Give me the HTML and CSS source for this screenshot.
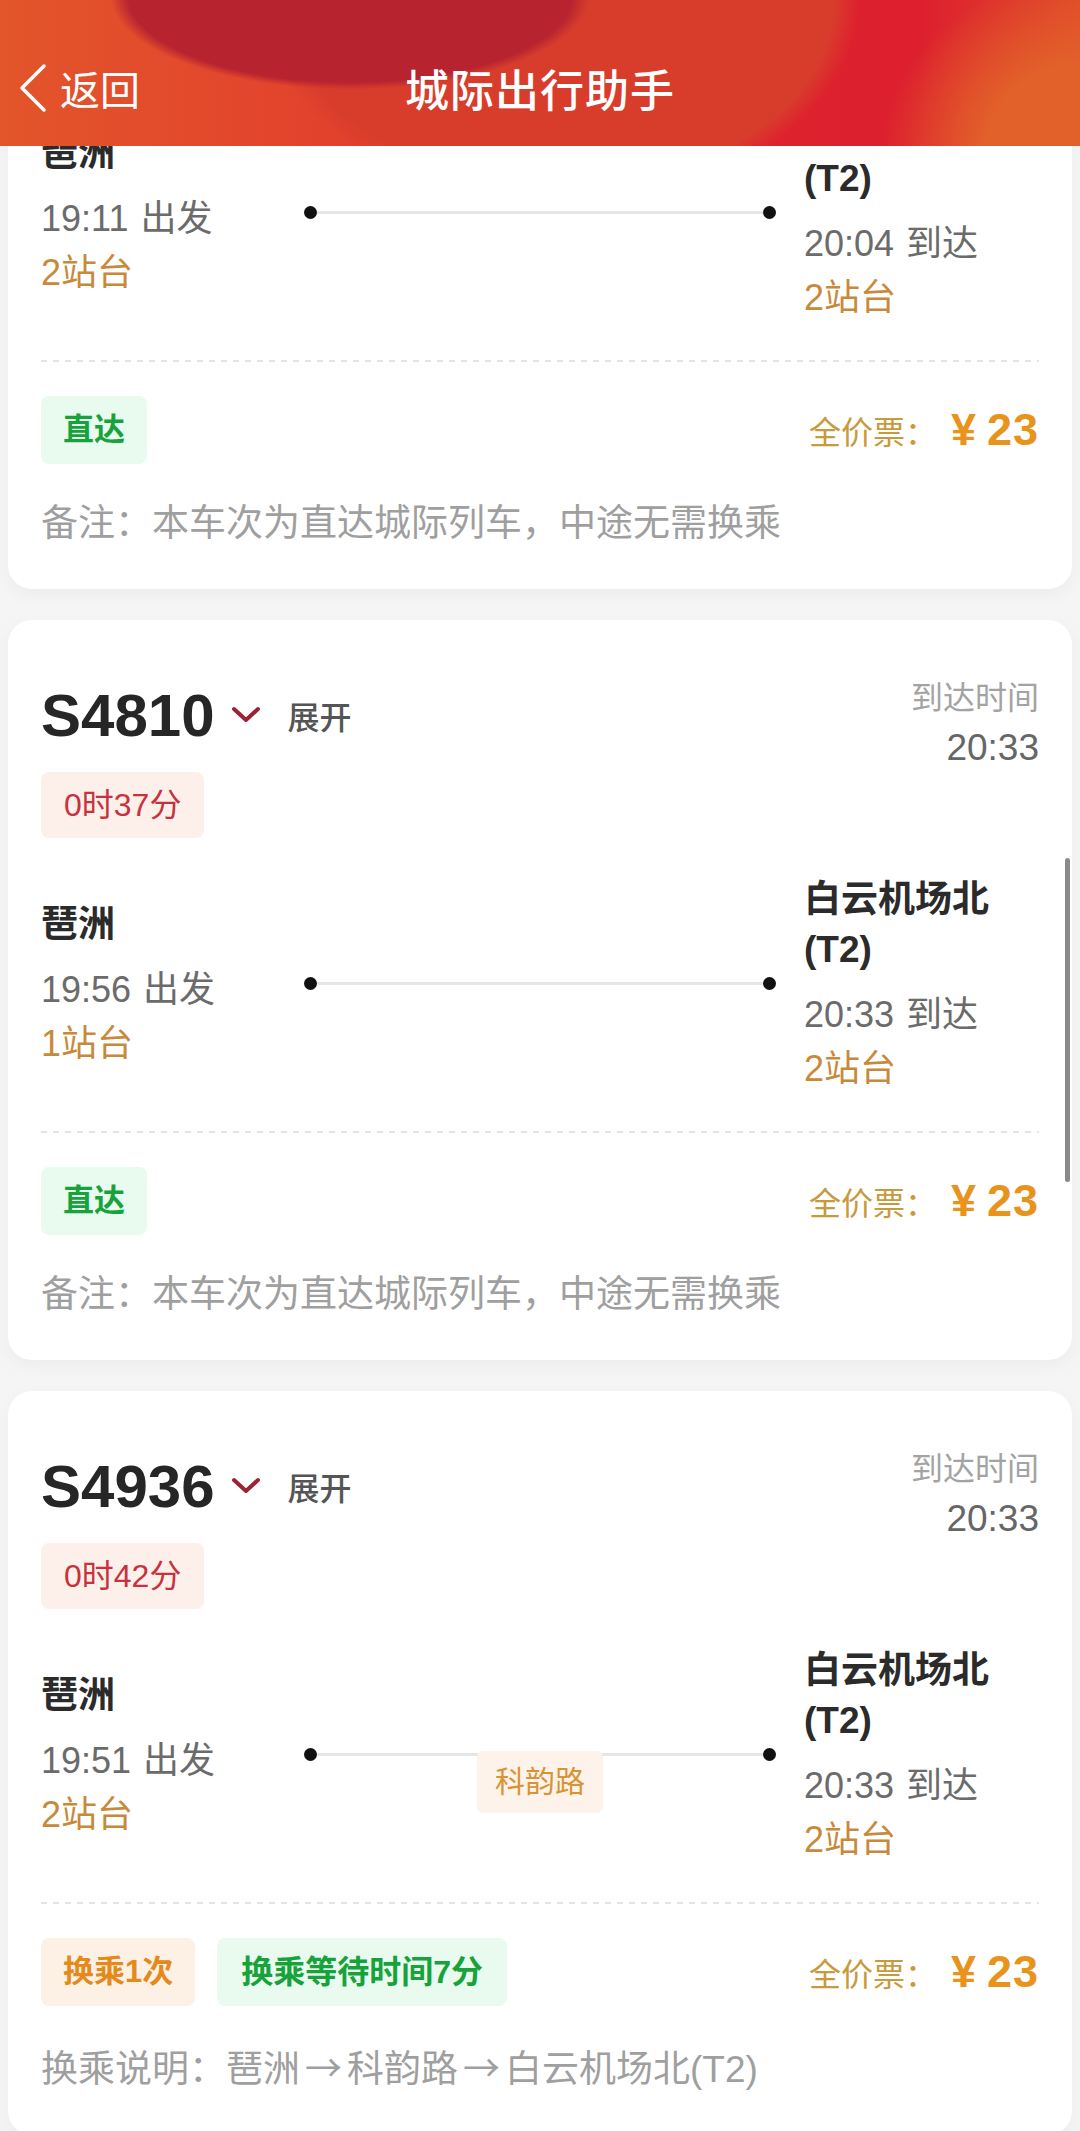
FILE: index.html
```html
<!DOCTYPE html>
<html lang="zh-CN">
<head>
    <meta charset="UTF-8">
    <meta name="viewport" content="width=device-width, initial-scale=1.0">
    <title>城际出行助手</title>
    <link rel="stylesheet" href="styles.css">
</head>
<body>
<div class="app">
    <header class="topbar">
        <a class="back">
            <svg class="back-icon" width="30" height="50" viewBox="0 0 30 50"><polyline points="26,3 4,25 26,47" fill="none" stroke="#fff" stroke-width="3.5" stroke-linecap="round" stroke-linejoin="round"/></svg>
            <span>返回</span>
        </a>
        <h1 class="title">城际出行助手</h1>
        <span></span>
    </header>

    <div class="feed">
        <div class="feed-inner">
            <!-- 已滚动到上方的车次 -->
            <div class="card">
                <div class="card-head">
                    <div class="head-left">
                        <div class="train"><span class="train-no">S4808</span><svg class="chev" width="30" height="18" viewBox="0 0 30 18"><polyline points="3,3 15,14 27,3" fill="none" stroke="#9b2335" stroke-width="4" stroke-linecap="round" stroke-linejoin="round"/></svg><span class="expand">展开</span></div>
                        <span class="tag tag-red">0时53分</span>
                    </div>
                    <div class="arrive">
                        <div class="arrive-label">到达时间</div>
                        <div class="arrive-time">20:04</div>
                    </div>
                </div>
                <div class="route">
                    <div class="stop">
                        <div class="stop-name">琶洲</div>
                        <div class="stop-time">19:11<span>出发</span></div>
                        <div class="stop-platform">2站台</div>
                    </div>
                    <div class="track"><i class="dot"></i><span class="track-line"></span><i class="dot"></i></div>
                    <div class="stop stop-end">
                        <div class="stop-name">白云机场北<br>(T2)</div>
                        <div class="stop-time">20:04<span>到达</span></div>
                        <div class="stop-platform">2站台</div>
                    </div>
                </div>
                <div class="divider"></div>
                <div class="card-foot">
                    <div class="tags"><span class="tag tag-green">直达</span></div>
                    <div class="price">全价票：<b><span class="yen">¥</span>23</b></div>
                </div>
                <p class="note">备注：本车次为直达城际列车，中途无需换乘</p>
            </div>

            <div class="card">
                <div class="card-head">
                    <div class="head-left">
                        <div class="train"><span class="train-no">S4810</span><svg class="chev" width="30" height="18" viewBox="0 0 30 18"><polyline points="3,3 15,14 27,3" fill="none" stroke="#9b2335" stroke-width="4" stroke-linecap="round" stroke-linejoin="round"/></svg><span class="expand">展开</span></div>
                        <span class="tag tag-red">0时37分</span>
                    </div>
                    <div class="arrive">
                        <div class="arrive-label">到达时间</div>
                        <div class="arrive-time">20:33</div>
                    </div>
                </div>
                <div class="route">
                    <div class="stop">
                        <div class="stop-name">琶洲</div>
                        <div class="stop-time">19:56<span>出发</span></div>
                        <div class="stop-platform">1站台</div>
                    </div>
                    <div class="track"><i class="dot"></i><span class="track-line"></span><i class="dot"></i></div>
                    <div class="stop stop-end">
                        <div class="stop-name">白云机场北<br>(T2)</div>
                        <div class="stop-time">20:33<span>到达</span></div>
                        <div class="stop-platform">2站台</div>
                    </div>
                </div>
                <div class="divider"></div>
                <div class="card-foot">
                    <div class="tags"><span class="tag tag-green">直达</span></div>
                    <div class="price">全价票：<b><span class="yen">¥</span>23</b></div>
                </div>
                <p class="note">备注：本车次为直达城际列车，中途无需换乘</p>
            </div>

            <div class="card">
                <div class="card-head">
                    <div class="head-left">
                        <div class="train"><span class="train-no">S4936</span><svg class="chev" width="30" height="18" viewBox="0 0 30 18"><polyline points="3,3 15,14 27,3" fill="none" stroke="#9b2335" stroke-width="4" stroke-linecap="round" stroke-linejoin="round"/></svg><span class="expand">展开</span></div>
                        <span class="tag tag-red">0时42分</span>
                    </div>
                    <div class="arrive">
                        <div class="arrive-label">到达时间</div>
                        <div class="arrive-time">20:33</div>
                    </div>
                </div>
                <div class="route">
                    <div class="stop">
                        <div class="stop-name">琶洲</div>
                        <div class="stop-time">19:51<span>出发</span></div>
                        <div class="stop-platform">2站台</div>
                    </div>
                    <div class="track">
                        <i class="dot"></i><span class="track-line"></span><i class="dot"></i>
                        <span class="via">科韵路</span>
                    </div>
                    <div class="stop stop-end">
                        <div class="stop-name">白云机场北<br>(T2)</div>
                        <div class="stop-time">20:33<span>到达</span></div>
                        <div class="stop-platform">2站台</div>
                    </div>
                </div>
                <div class="divider"></div>
                <div class="card-foot">
                    <div class="tags">
                        <span class="tag tag-orange">换乘1次</span>
                        <span class="tag tag-green">换乘等待时间7分</span>
                    </div>
                    <div class="price">全价票：<b><span class="yen">¥</span>23</b></div>
                </div>
                <p class="note">换乘说明：琶洲<span class="arrow">→</span>科韵路<span class="arrow">→</span>白云机场北(T2)</p>
            </div>
        </div>
        <div class="scrollbar"></div>
    </div>
</div>
</body>
</html>
```

FILE: styles.css
```css
/* Página */
body {
    margin: 0;
    font-family: "Liberation Sans", "Noto Sans CJK SC", sans-serif;
    background-color: #f5f5f5;
    color: #333;
}

.app {
    display: flex;
    flex-direction: column;
    height: 100vh;
    overflow: hidden;
}

/* Barra superior */
.topbar {
    flex: none;
    height: 146px;
    box-sizing: border-box;
    padding-top: 30px;
    display: grid;
    grid-template-columns: 1fr auto 1fr;
    align-items: center;
    color: #fff;
    background:
        radial-gradient(ellipse 300px 118px at 350px -5px, #b72430 0 74%, rgba(183, 36, 48, 0) 80%),
        radial-gradient(ellipse 440px 300px at 560px 0px, #d83d2c 0 62%, rgba(216, 61, 44, 0) 68%),
        radial-gradient(ellipse 260px 220px at 1090px 150px, #e2602a 0 40%, rgba(226, 96, 42, 0) 80%),
        linear-gradient(90deg, #e3552b 0%, #e2422c 30%, #df252d 62%, #dd1f2e 85%, #e0482a 100%);
}

.back {
    display: flex;
    align-items: center;
    padding-left: 18px;
    font-size: 40px;
}

.back-icon {
    margin-right: 12px;
}

.title {
    margin: 0;
    font-size: 44px;
    font-weight: 500;
    letter-spacing: 1px;
}

/* Lista */
.feed {
    flex: 1;
    position: relative;
    overflow: hidden;
}

.feed-inner {
    margin-top: -297px;
    display: flex;
    flex-direction: column;
    gap: 31px;
}

.card {
    margin: 0 8px;
    padding: 57px 33px 43px;
    background-color: #fff;
    border-radius: 24px;
    box-shadow: 0 6px 18px rgba(0, 0, 0, 0.04);
}

.card-head {
    display: flex;
    justify-content: space-between;
    align-items: flex-start;
}

.head-left {
    display: flex;
    flex-direction: column;
    align-items: flex-start;
}

.train {
    display: flex;
    align-items: center;
    height: 76px;
}

.train-no {
    font-size: 60px;
    font-weight: bold;
    color: #262626;
}

.chev {
    margin-left: 16px;
}

.expand {
    margin-left: 27px;
    font-size: 32px;
    font-weight: 500;
    color: #555;
}

.arrive {
    text-align: right;
}

.arrive-label {
    font-size: 32px;
    line-height: 42px;
    color: #a3a3a3;
}

.arrive-time {
    font-size: 37px;
    line-height: 58px;
    color: #666;
}

/* Etiquetas */
.tag {
    display: inline-block;
    height: 68px;
    line-height: 68px;
    padding: 0 22px;
    border-radius: 8px;
    font-size: 31px;
    font-weight: bold;
}

.head-left .tag {
    margin-top: 19px;
    height: 66px;
    line-height: 66px;
    padding: 0 23px;
    font-size: 32px;
    font-weight: normal;
}

.tag-red {
    background-color: #fdf0ea;
    color: #c6323e;
}

.tag-green {
    background-color: #e8fbee;
    color: #17a23b;
}

.tag-orange {
    background-color: #fdf1e6;
    color: #e5891b;
}

.tag-orange + .tag-green {
    font-size: 32px;
    padding: 0 24px;
}

/* Recorrido */
.route {
    margin-top: 37px;
    display: grid;
    grid-template-columns: 1fr 472px 1fr;
    align-items: center;
}

.stop-end {
    padding-left: 28px;
}

.stop-name {
    font-size: 37px;
    line-height: 50px;
    font-weight: bold;
    color: #2b2b2b;
}

.stop-time {
    margin-top: 13px;
    font-size: 36px;
    line-height: 54px;
    color: #6b6b6b;
}

.stop-time span {
    margin-left: 12px;
}

.stop-platform {
    font-size: 36px;
    line-height: 54px;
    color: #c8893a;
}

.track {
    position: relative;
    display: flex;
    align-items: center;
    margin-top: -4px;
}

.dot {
    width: 13px;
    height: 13px;
    border-radius: 50%;
    background-color: #111;
}

.track-line {
    flex: 1;
    height: 3px;
    background-color: #e6e6e6;
}

.via {
    position: absolute;
    left: 50%;
    top: calc(50% - 4px);
    transform: translateX(-50%);
    height: 62px;
    line-height: 62px;
    padding: 0 18px;
    border-radius: 6px;
    background-color: #fdf3eb;
    color: #d99334;
    font-size: 30px;
    white-space: nowrap;
}

.divider {
    margin-top: 35px;
    height: 2px;
    background: repeating-linear-gradient(90deg, #e4e4e4 0 6px, transparent 6px 12px);
}

.card-foot {
    margin-top: 34px;
    display: flex;
    justify-content: space-between;
    align-items: center;
}

.tags {
    display: flex;
    gap: 22px;
}

.price {
    display: flex;
    align-items: center;
    font-size: 32px;
    color: #c79a3d;
}

.price b {
    margin-left: 14px;
    font-size: 45px;
    letter-spacing: 1px;
    color: #e8931c;
}

.yen {
    margin-right: 10px;
}

.note {
    margin: 38px 0 0;
    font-size: 37px;
    line-height: 44px;
    color: #9f9f9f;
}

.arrow {
    font-family: "Noto Sans CJK SC", sans-serif;
    font-size: 37px;
    margin: 0 5px;
}

.scrollbar {
    position: absolute;
    top: 712px;
    right: 10px;
    width: 5px;
    height: 324px;
    border-radius: 3px;
    background-color: #8a8a8a;
}
```
